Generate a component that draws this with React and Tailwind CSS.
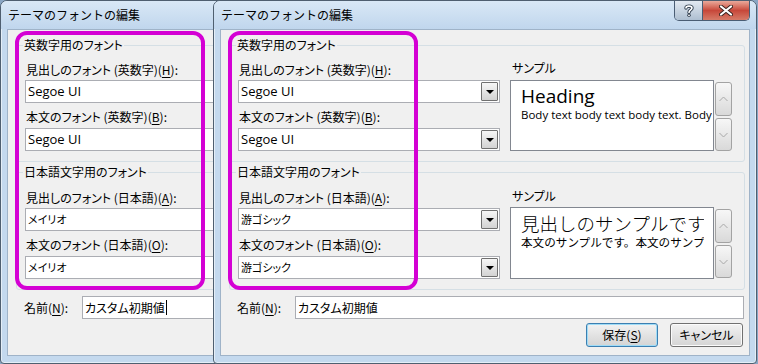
import React from "react";

const JP = "font-['Meiryo_UI','Noto_Sans_CJK_JP',sans-serif] [font-feature-settings:'palt']";
const JPN = "font-['Meiryo_UI','Noto_Sans_CJK_JP',sans-serif]";
const LAT = "font-['Segoe_UI','Open_Sans',sans-serif]";

function Label({ children, className = "" }) {
  return (
    <div className={`h-[16px] whitespace-nowrap pl-[1px] text-[12px] leading-[16px] text-black ${JP} ${className}`}>
      {children}
    </div>
  );
}

function Combo({ value, latin, className = "" }) {
  return (
    <div className={`flex h-[23px] w-[262px] items-center border border-[#abadb3] bg-white ${className}`}>
      <div
        className={`flex-1 overflow-hidden whitespace-nowrap pl-[2px] text-black ${
          latin ? `${LAT} text-[13px]` : `${JP} text-[11px]`
        }`}
      >
        {value}
      </div>
      <div className="mr-[1px] flex h-[19px] w-[17px] items-center justify-center rounded-[1px] border border-[#707070] bg-linear-to-b from-[#f6f6f6] to-[#d3d3d3]">
        <div className="h-0 w-0 border-x-[4px] border-t-[4px] border-x-transparent border-t-black" />
      </div>
    </div>
  );
}

function ScrollBtn({ up, h }) {
  return (
    <div
      className={`flex w-[17px] items-center justify-center rounded-[3px] border border-[#a3a3a3] bg-linear-to-b from-[#f7f7f7] to-[#d9d9d9] ${h}`}
    >
      <svg width="9" height="6" viewBox="0 0 9 6">
        {up ? (
          <polyline points="0.5,5 4.5,1 8.5,5" fill="none" stroke="#a8a8a8" strokeWidth="1" />
        ) : (
          <polyline points="0.5,1 4.5,5 8.5,1" fill="none" stroke="#a8a8a8" strokeWidth="1" />
        )}
      </svg>
    </div>
  );
}

function Sample({ heading, body, jp, h }) {
  return (
    <div className="flex gap-[1px]">
      <div className={`w-[204px] border border-[#828790] bg-white pl-[10px] pt-[3px] ${h}`}>
        <div className={`overflow-hidden ${jp ? "w-[183px]" : "w-[191px]"}`}>
          <div
            className={`whitespace-nowrap leading-[24px] text-black ${
              jp ? `${JPN} text-[18.5px] font-light` : `${LAT} text-[19px]`
            }`}
          >
            {heading}
          </div>
          <div
            className={`whitespace-nowrap leading-[14px] text-black ${
              jp ? `${JPN} text-[11.6px]` : `${LAT} text-[11.5px]`
            }`}
          >
            {body}
          </div>
        </div>
      </div>
      <div className="mt-[2px] flex flex-col gap-[2px]">
        <ScrollBtn up h="h-[34px]" />
        <ScrollBtn h="h-[33px]" />
      </div>
    </div>
  );
}

function Group({ title, children, className = "" }) {
  return (
    <div className={`relative w-[516px] rounded-[3px] border border-[#d5dfe5] pl-[8px] pb-[10px] ${className}`}>
      <span className={`absolute left-[6px] top-[-9px] bg-[#f0f0f0] px-[1px] text-[12px] leading-[16px] text-black ${JP}`}>
        {title}
      </span>
      {children}
    </div>
  );
}

function U({ children }) {
  return <span className="underline underline-offset-2">{children}</span>;
}

function Dialog({ pos, jpValue, cursor }) {
  return (
    <div
      className={`absolute top-0 flex h-[364px] w-[544px] flex-col rounded-t-[7px] rounded-b-[4px] border border-[#4f5f70] bg-[#c4d9ee] shadow-[inset_0_0_0_1px_rgba(255,255,255,0.55)] ${pos}`}
    >
      {/* title bar */}
      <div className="flex h-[28px] rounded-t-[6px] bg-linear-to-b from-[#d9e8f6] to-[#c0d6ed]">
        <div className={`self-center pl-[7px] text-[12px] leading-[16px] text-black ${JPN}`}>テーマのフォントの編集</div>
        <div className="ml-auto mr-[6px] flex h-[20px] self-start overflow-hidden rounded-b-[5px] border border-t-0 border-[#4a5d74]">
          <div className="flex w-[28px] items-center justify-center border-r border-[#4a5d74] bg-linear-to-b from-[#e2e9f1] to-[#aebfd1]">
            <svg width="10" height="13" viewBox="0 0 10 13">
              <path
                d="M2 4 C2 1.5 8 1.5 8 4 C8 6 5 6 5 8.5"
                fill="none"
                stroke="#2f3d4d"
                strokeWidth="3.4"
                strokeLinecap="round"
              />
              <circle cx="5" cy="11.3" r="1.7" fill="#2f3d4d" />
              <path
                d="M2 4 C2 1.5 8 1.5 8 4 C8 6 5 6 5 8.5"
                fill="none"
                stroke="#ffffff"
                strokeWidth="1.6"
                strokeLinecap="round"
              />
              <circle cx="5" cy="11.3" r="0.9" fill="#ffffff" />
            </svg>
          </div>
          <div className="flex w-[46px] items-center justify-center bg-linear-to-b from-[#e9a99b] via-[#c7473a] to-[#d67a68]">
            <svg width="14" height="11" viewBox="0 0 14 11">
              <path d="M2 1.5 L12 9.5 M12 1.5 L2 9.5" stroke="#3b2420" strokeWidth="4" strokeLinecap="round" />
              <path d="M2 1.5 L12 9.5 M12 1.5 L2 9.5" stroke="#ffffff" strokeWidth="2.2" strokeLinecap="round" />
            </svg>
          </div>
        </div>
      </div>

      {/* client */}
      <div className="relative mx-[6px] mb-[7px] flex h-[327px] flex-col border border-[#9fb3c8] bg-[#f0f0f0] pl-[8px] pt-[15px]">
        <Group title="英数字用のフォント">
          <div className="flex pt-[16px]">
            <div className="flex w-[262px] flex-col">
              <Label>
                見出しのフォント (英数字)(<U>H</U>):
              </Label>
              <Combo className="mt-[2px]" value="Segoe UI" latin />
              <Label className="mt-[6px]">
                本文のフォント (英数字)(<U>B</U>):
              </Label>
              <Combo className="mt-[3px]" value="Segoe UI" latin />
            </div>
            <div className="ml-[10px] flex flex-col">
              <Label className="-mt-[2px] pl-[2px]">サンプル</Label>
              <div className="mt-[4px]">
                <Sample heading="Heading" body="Body text body text body text. Body text body text." h="h-[71px]" />
              </div>
            </div>
          </div>
        </Group>

        <Group title="日本語文字用のフォント" className="mt-[10px]">
          <div className="flex pt-[17px]">
            <div className="flex w-[262px] flex-col">
              <Label>
                見出しのフォント (日本語)(<U>A</U>):
              </Label>
              <Combo className="mt-[2px]" value={jpValue} />
              <Label className="mt-[6px]">
                本文のフォント (日本語)(<U>O</U>):
              </Label>
              <Combo className="mt-[3px]" value={jpValue} />
            </div>
            <div className="ml-[10px] flex flex-col">
              <Label className="-mt-[2px] pl-[2px]">サンプル</Label>
              <div className="mt-[3px]">
                <Sample
                  jp
                  heading="見出しのサンプルです"
                  body="本文のサンプルです。本文のサンプルです。"
                  h="h-[72px]"
                />
              </div>
            </div>
          </div>
        </Group>

        <div className="mt-[6px] flex items-center pl-[8px]">
          <div className={`w-[58px] text-[12px] leading-[16px] text-black ${JP}`}>
            名前(<U>N</U>):
          </div>
          <div className={`flex h-[23px] w-[449px] items-center border border-[#abadb3] bg-white pl-[2px] text-[12px] text-black ${JP}`}>
            カスタム初期値
            {cursor && <span className="ml-[1px] inline-block h-[15px] w-[1px] bg-black" />}
          </div>
        </div>

        <div className="mt-[4px] flex w-[516px] justify-end gap-[12px] pr-[2px]">
          <div
            className={`flex h-[24px] w-[72px] items-center justify-center rounded-[3px] border border-[#3c7fb1] bg-linear-to-b from-[#f2f2f2] to-[#d4d4d4] text-[12px] text-black shadow-[inset_0_0_0_1px_#9fdcf7] ${JP}`}
          >
            保存(<U>S</U>)
          </div>
          <div
            className={`flex h-[24px] w-[73px] items-center justify-center rounded-[3px] border border-[#707070] bg-linear-to-b from-[#f2f2f2] to-[#d4d4d4] text-[12px] text-black shadow-[inset_0_0_0_1px_#fbfbfb] ${JP}`}
          >
            キャンセル
          </div>
        </div>

        {/* magenta highlight annotation */}
        <div className="pointer-events-none absolute left-[7px] top-[1px] h-[259px] w-[190px] rounded-[12px] border-[4px] border-[#d400d4]" />
      </div>
    </div>
  );
}

export default function App() {
  return (
    <div className="relative h-[364px] w-[758px] overflow-hidden bg-[#8aa6c4]">
      <Dialog pos="left-0" jpValue="メイリオ" cursor />
      <Dialog pos="left-[213px]" jpValue="游ゴシック" />
    </div>
  );
}
